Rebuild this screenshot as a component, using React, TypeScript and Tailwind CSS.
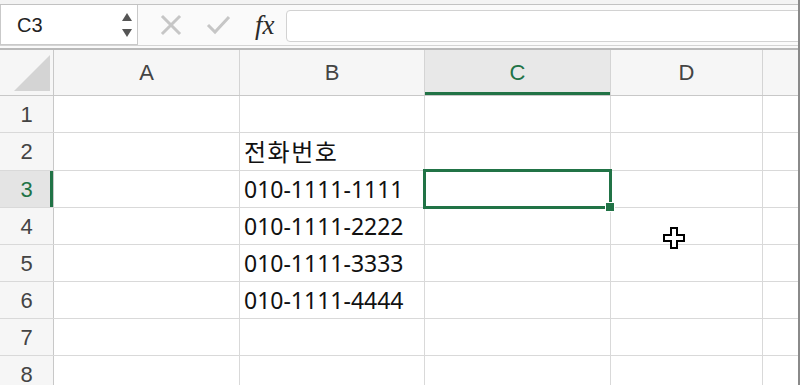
import React from "react"

const cols = ["A", "B", "C", "D", ""]
const widths = ["w-[186px]", "w-[185px]", "w-[186px]", "w-[152px]", "flex-1"]
const rowHeights = ["h-[37px]", "h-[38px]", "h-[37px]", "h-[37px]", "h-[37px]", "h-[37px]", "h-[37px]", "h-[37px]"]
const data: Record<string, string> = {
  "2B": "전화번호",
  "3B": "010-1111-1111",
  "4B": "010-1111-2222",
  "5B": "010-1111-3333",
  "6B": "010-1111-4444",
}

function FormulaBar() {
  return (
    <div className="h-[45px]">
      <div className="h-[4px] bg-[#f3f3f3]" />
      <div className="flex h-[41px] border-t border-[#c2c2c2] bg-[#fafafa]">
        <div className="flex w-[138px] items-center justify-between border-r border-b border-l border-[#c9c9c9] bg-white pl-[16px] pr-[4px] font-['Liberation_Sans',sans-serif] text-[20px] text-[#222]">
          <span>C3</span>
          <svg width="12" height="26" viewBox="0 0 12 26">
            <path d="M6 1 L11 9 L1 9 Z" fill="#555" />
            <path d="M1 17 L11 17 L6 25 Z" fill="#555" />
          </svg>
        </div>
        <div className="flex items-center pl-[22px]">
          <svg width="22" height="22" viewBox="0 0 22 22">
            <path d="M3 3 L19 19 M19 3 L3 19" stroke="#c6c6c6" strokeWidth="3" strokeLinecap="square" />
          </svg>
          <svg className="ml-[24px]" width="26" height="22" viewBox="0 0 26 22">
            <path d="M2 11 L9 18 L23 3" stroke="#c6c6c6" strokeWidth="3" fill="none" />
          </svg>
          <span className="ml-[23px] font-['Liberation_Serif',serif] text-[27px] italic leading-none text-[#2a2a2a]">fx</span>
        </div>
        <div className="ml-[11px] mt-[5px] h-[32px] flex-1 rounded-l-[4px] border border-[#d2d2d2] bg-white" />
      </div>
    </div>
  )
}

function HeaderRow() {
  return (
    <div className="flex h-[46px] border-b border-[#c8c8c8] bg-[#f6f6f6] font-['Liberation_Sans',sans-serif] text-[22px] text-[#444]">
      <div className="relative w-[54px] border-r border-[#c8c8c8]">
        <svg className="absolute left-[14px] top-[5px]" width="36" height="36" viewBox="0 0 36 36">
          <path d="M36 0 L36 36 L0 36 Z" fill="#d4d4d4" />
        </svg>
      </div>
      {cols.map((c, i) => (
        <div
          key={i}
          className={
            c === "C"
              ? `${widths[i]} flex items-center justify-center border-r border-[#d4d4d4] bg-[#e8e8e8] text-[#217346] shadow-[inset_0_-3px_0_#217346]`
              : `${widths[i]} flex items-center justify-center ${i < 4 ? "border-r border-[#d4d4d4]" : ""}`
          }
        >
          {c}
        </div>
      ))}
    </div>
  )
}

function Row({ n }: { n: number }) {
  const sel = n === 3
  return (
    <div className={`flex ${rowHeights[n - 1]} border-b border-[#d9d9d9]`}>
      <div
        className={
          sel
            ? "flex w-[54px] items-center justify-center border-r border-[#c8c8c8] bg-[#e4e4e4] font-['Liberation_Sans',sans-serif] text-[22px] text-[#217346] shadow-[inset_-3px_0_0_#217346]"
            : "flex w-[54px] items-center justify-center border-r border-[#c8c8c8] bg-[#f6f6f6] font-['Liberation_Sans',sans-serif] text-[22px] text-[#444]"
        }
      >
        {n}
      </div>
      {cols.map((c, i) => {
        const v = data[`${n}${c}`] ?? ""
        const korean = n === 2 && c === "B"
        return (
          <div
            key={i}
            className={`${widths[i]} relative flex items-center pl-[4px] font-['Noto_Sans','Noto_Sans_CJK_KR',sans-serif] text-[#111] ${korean ? "text-[24px] tracking-[1.5px]" : "text-[23px]"} ${i < 4 ? "border-r border-[#d9d9d9]" : ""}`}
          >
            <span className="whitespace-nowrap">{v}</span>
            {sel && c === "C" && (
              <>
                <div className="absolute left-[-2px] top-[-2px] z-10 h-[40px] w-[189px] border-[3px] border-[#217346]" />
                <div className="absolute left-[180px] top-[31px] z-10 h-[10px] w-[10px] border border-white bg-[#217346]" />
              </>
            )}
          </div>
        )
      })}
    </div>
  )
}

export default function App() {
  return (
    <div className="relative h-[385px] w-[800px] overflow-hidden bg-white">
      <FormulaBar />
      <div className="h-[5px] border-t border-[#d4d4d4] border-b-2 border-b-[#b9b9b9] bg-[#fafafa]" />
      <HeaderRow />
      {[1, 2, 3, 4, 5, 6, 7, 8].map((n) => (
        <Row key={n} n={n} />
      ))}
      <div className="absolute right-0 top-0 h-full w-[2px] bg-[#8a8a8a]" />
      <svg className="absolute left-[662px] top-[226px] z-20" width="24" height="24" viewBox="0 0 24 24">
        <path
          d="M9 2 H15 V9 H22 V15 H15 V22 H9 V15 H2 V9 H9 Z"
          fill="white"
          stroke="black"
          strokeWidth="2"
          strokeLinejoin="miter"
        />
      </svg>
    </div>
  )
}
